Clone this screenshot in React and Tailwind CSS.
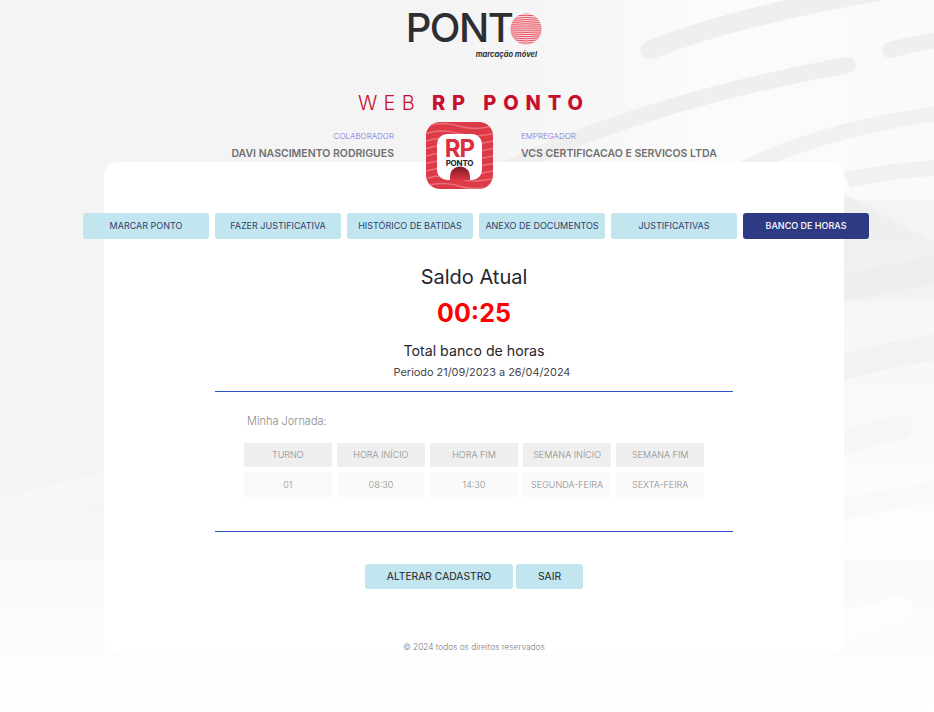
import React from "react";

const TABS = [
  "MARCAR PONTO",
  "FAZER JUSTIFICATIVA",
  "HISTÓRICO DE BATIDAS",
  "ANEXO DE DOCUMENTOS",
  "JUSTIFICATIVAS",
];
const HEAD = ["TURNO", "HORA INÍCIO", "HORA FIM", "SEMANA INÍCIO", "SEMANA FIM"];
const ROW = ["01", "08:30", "14:30", "SEGUNDA-FEIRA", "SEXTA-FEIRA"];

function Background() {
  return (
    <svg className="absolute inset-0 w-full h-full" viewBox="0 0 934 712" fill="none" strokeLinecap="round">
      <defs>
        <linearGradient id="fade" x1="0" y1="0" x2="0" y2="1">
          <stop offset="0" stopColor="#f4f4f4" />
          <stop offset="0.66" stopColor="#f4f4f4" />
          <stop offset="1" stopColor="#ffffff" />
        </linearGradient>
        <linearGradient id="glow" x1="0" y1="0" x2="1" y2="0">
          <stop offset="0.4" stopColor="#f4f4f4" stopOpacity="0" />
          <stop offset="0.75" stopColor="#fbfbfb" />
          <stop offset="1" stopColor="#fafafa" />
        </linearGradient>
        <linearGradient id="sideFade" x1="0" y1="0" x2="0" y2="1">
          <stop offset="0" stopColor="#ffffff" stopOpacity="0" />
          <stop offset="1" stopColor="#ffffff" stopOpacity="0.85" />
        </linearGradient>
      </defs>
      <rect width="934" height="712" fill="url(#fade)" />
      <rect width="934" height="200" fill="url(#glow)" />
      <g stroke="#efefef">
        <path d="M650 50 C710 26 790 6 900 -12" strokeWidth="19" />
        <path d="M848 65 C740 84 610 118 500 172" strokeWidth="16" />
        <path d="M890 50 C905 46 920 42 950 38" strokeWidth="16" />
        <path d="M740 170 C800 140 870 122 950 112" strokeWidth="15" stroke="#f1f1f1" />
      </g>
      <path d="M844 194 L934 242 L934 300 L844 300 Z" fill="#efefef" />
      <path d="M844 172 C875 166 905 162 934 160 L934 176 C905 178 875 182 850 188 Z" fill="#f1f1f1" />
      <rect x="844" y="230" width="90" height="330" fill="url(#sideFade)" />
      <g stroke="#eeeeee">
        <path d="M830 292 C870 282 900 275 950 268" strokeWidth="27" />
        <path d="M830 370 C870 360 900 352 950 345" strokeWidth="26" stroke="#f2f2f2" />
        <path d="M830 446 C860 438 885 430 901 427" strokeWidth="24" stroke="#f6f6f6" />
        <path d="M830 512 C870 502 900 497 950 490" strokeWidth="20" stroke="#f9f9f9" />
      </g>
      <g stroke="#f7f7f7">
        <path d="M-20 520 C30 505 70 495 130 480" strokeWidth="28" />
        <path d="M-20 600 C30 590 70 580 130 565" strokeWidth="24" stroke="#fafafa" />
        <path d="M600 690 C680 670 760 650 900 610" strokeWidth="28" stroke="#fdfdfd" />
      </g>
    </svg>
  );
}

function LogoMark() {
  const lines = [];
  for (let y = 14; y < 46; y += 1.9) lines.push(y);
  return (
    <svg width="32" height="32" viewBox="14 14 32 32" className="-ml-[2px] mt-[1px] shrink-0">
      <defs>
        <clipPath id="disc">
          <circle cx="30" cy="30" r="15.5" />
        </clipPath>
      </defs>
      <g clipPath="url(#disc)">
        <rect x="14" y="14" width="32" height="32" fill="#fbdde0" />
        {lines.map((y) => (
          <path key={y} d={`M14 ${y} Q30 ${y + (y - 30) * 0.25} 46 ${y}`} stroke="#e4505e" strokeWidth="1" fill="none" />
        ))}
      </g>
    </svg>
  );
}

function AppIcon() {
  const waves = [];
  for (let y = 4; y < 70; y += 7.5) waves.push(y);
  return (
    <svg width="67" height="67" viewBox="0 0 67 67" className="shrink-0">
      <defs>
        <clipPath id="badge">
          <rect width="67" height="67" rx="14" />
        </clipPath>
        <clipPath id="inner">
          <rect x="11" y="12" width="45" height="46" rx="10" />
        </clipPath>
        <linearGradient id="arc" x1="0" y1="0" x2="0" y2="1">
          <stop offset="0" stopColor="#7e1a26" />
          <stop offset="1" stopColor="#d8343f" />
        </linearGradient>
      </defs>
      <g clipPath="url(#badge)">
        <rect width="67" height="67" fill="#dc3a46" />
        {waves.map((y) => (
          <path key={y} d={`M0 ${y} q17 -5 33 0 t34 0`} stroke="#e8707a" strokeWidth="1.6" fill="none" />
        ))}
      </g>
      <rect x="11" y="12" width="45" height="46" rx="10" fill="#ffffff" />
      <g clipPath="url(#inner)">
        <path d="M24 58 L24 55 C24 41 44 41 44 55 L44 58 Z" fill="url(#arc)" />
      </g>
      <text x="33.5" y="34.5" textAnchor="middle" fontSize="24" fontWeight="700" fill="#dc2f3d" letterSpacing="-0.8">RP</text>
      <text x="33.5" y="43.5" textAnchor="middle" fontSize="8" fontWeight="700" fill="#222222" letterSpacing="-0.2">PONTO</text>
    </svg>
  );
}

export default function App() {
  return (
    <div className="relative min-h-screen overflow-hidden font-['Inter',sans-serif]">
      <Background />
      <div className="relative ml-[104px] w-[740px] h-[712px] flex flex-col">
        <div className="h-[86px] pt-[9px] flex flex-col items-center">
          <div className="flex items-center h-[38px]">
            <span className="text-[40px] leading-none font-medium tracking-[-1.5px] text-[#2e2e30]">PONT</span>
            <LogoMark />
          </div>
          <div className="mt-[3px] w-[134px] text-right pr-[4px] text-[7.5px] leading-[10px] italic font-bold text-[#333333]">
            marcação móvel
          </div>
        </div>

        <div className="h-[36px] pb-[2px] flex justify-center items-center text-[20px] leading-none text-[#c8102e]">
          <span className="font-light tracking-[6.2px] mr-[11px]">WEB</span>
          <span className="font-extrabold tracking-[6.9px]">RP PONTO</span>
        </div>

        <div className="relative z-10 h-[67px] flex justify-center items-start">
          <div className="w-[322px] pr-[32px] pt-[8px] text-right">
            <div className="text-[8px] leading-[12px] font-light text-[#7b74d8]">COLABORADOR</div>
            <div className="mt-[4px] text-[10.5px] leading-[16px] font-semibold text-[#6f6f6f]">DAVI NASCIMENTO RODRIGUES</div>
          </div>
          <AppIcon />
          <div className="w-[351px] pl-[28px] pt-[8px]">
            <div className="text-[8px] leading-[12px] font-light text-[#7b74d8]">EMPREGADOR</div>
            <div className="mt-[4px] text-[10.5px] leading-[16px] font-semibold text-[#6f6f6f]">VCS CERTIFICACAO E SERVICOS LTDA</div>
          </div>
        </div>

        <div className="-mt-[27px] h-[492px] bg-white rounded-[14px] flex flex-col items-center">
          <div className="mt-[51px] ml-[4px] w-[786px] shrink-0 flex gap-[6px]">
            {TABS.map((t) => (
              <button key={t} className="w-[126px] h-[26px] rounded-[3px] bg-[#c1e6f0] text-[9px] text-[#33406b]">
                {t}
              </button>
            ))}
            <button className="w-[126px] h-[26px] rounded-[3px] bg-[#2e3b84] text-[9px] font-medium text-white">
              BANCO DE HORAS
            </button>
          </div>

          <h2 className="mt-[25px] text-[20px] leading-[26px] text-[#26262e]">Saldo Atual</h2>
          <div className="mt-[6px] text-[25px] leading-[34px] font-bold text-[#ff0000]">00:25</div>
          <div className="mt-[11px] text-[14.2px] leading-[20px] text-[#26262e]">Total banco de horas</div>
          <div className="mt-[2px] ml-[16px] text-[10.9px] leading-[18px] text-[#44444c]">Periodo 21/09/2023 a 26/04/2024</div>

          <div className="mt-[10px] w-[518px] border-t border-[#2f52c8]" />

          <div className="mt-[21px] w-[460px]">
            <div className="pl-[3px] text-[11px] leading-[16px] font-light text-[#8a8a8a]">Minha Jornada:</div>
            <div className="mt-[14px] grid grid-cols-5 gap-x-[5.5px] gap-y-[5px]">
              {HEAD.map((h) => (
                <div key={h} className="h-[24px] bg-[#efefef] flex items-center justify-center text-[9px] font-light text-[#8c8c8c]">
                  {h}
                </div>
              ))}
              {ROW.map((c) => (
                <div key={c} className="h-[25px] bg-[#fafafa] flex items-center justify-center text-[9px] font-light text-[#8c8c8c]">
                  {c}
                </div>
              ))}
            </div>
          </div>

          <div className="mt-[34px] w-[518px] border-t border-[#2f52c8]" />

          <div className="mt-[32px] flex gap-[3px]">
            <button className="w-[148px] h-[25px] rounded-[3px] bg-[#c1e6f0] text-[10.3px] text-[#222222]">ALTERAR CADASTRO</button>
            <button className="w-[67px] h-[25px] rounded-[3px] bg-[#c1e6f0] text-[10.3px] text-[#222222]">SAIR</button>
          </div>

          <div className="mt-[52px] text-[8.3px] leading-[12px] font-light text-[#777777]">© 2024 todos os direitos reservados</div>
        </div>
      </div>
    </div>
  );
}
